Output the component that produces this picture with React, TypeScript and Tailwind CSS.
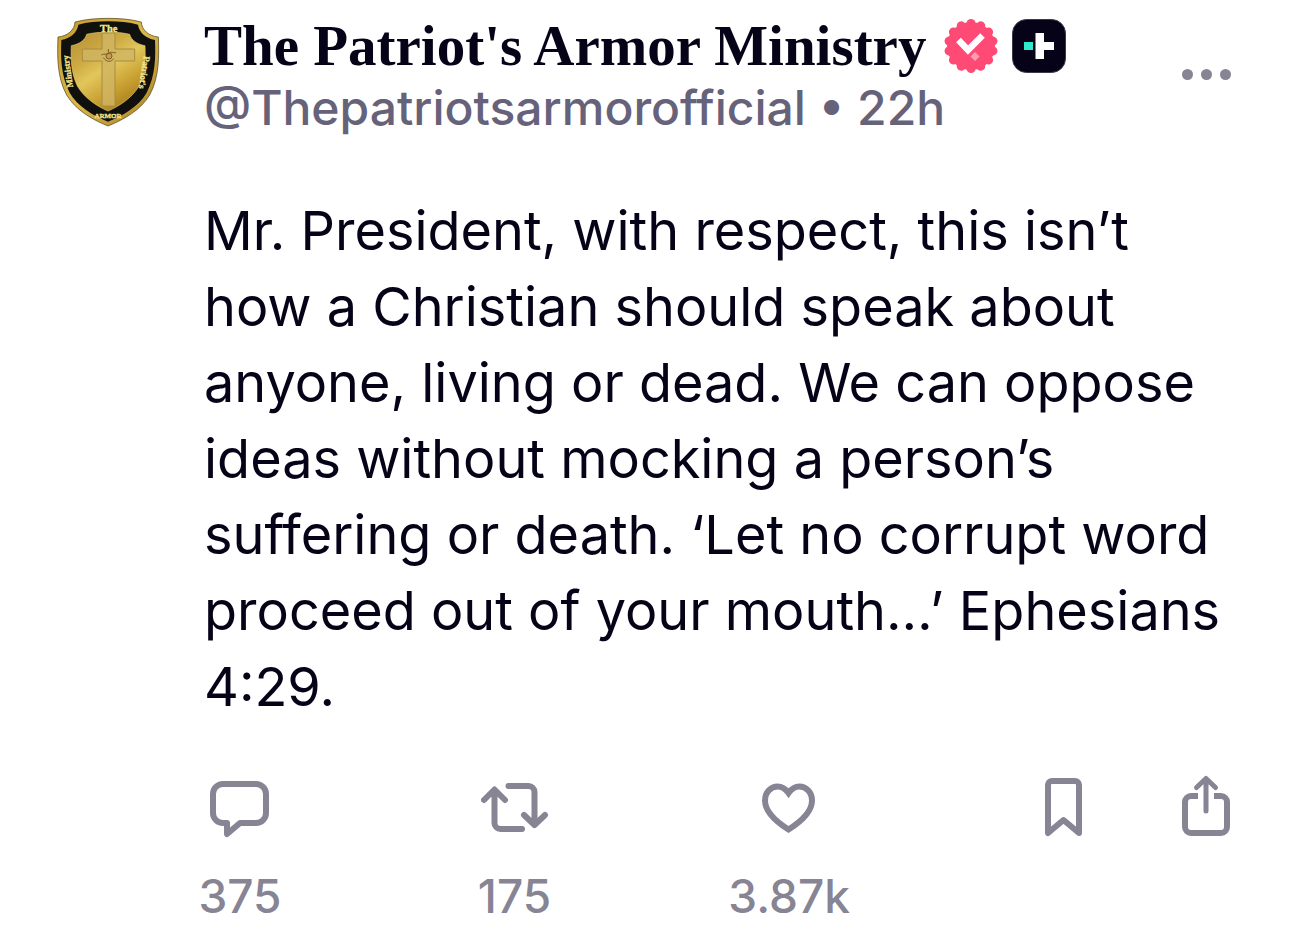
import type { ReactNode } from "react";

const Avatar = () => {
  return (
    <svg viewBox="45 30 321 339" className="h-[113px] w-[107px] shrink-0" role="img" aria-label="Shield">
      <defs>
        <linearGradient id="rim" x1="0" y1="0" x2="1" y2="1">
          <stop offset="0" stopColor="#c59a2c" />
          <stop offset="0.5" stopColor="#d9b84c" />
          <stop offset="1" stopColor="#a87c1c" />
        </linearGradient>
        <linearGradient id="plate" x1="0.1" y1="0" x2="0.7" y2="1">
          <stop offset="0" stopColor="#b8933a" />
          <stop offset="0.3" stopColor="#cdaa42" />
          <stop offset="0.5" stopColor="#e2c65c" />
          <stop offset="0.75" stopColor="#c9a132" />
          <stop offset="1" stopColor="#a67c1a" />
        </linearGradient>
      </defs>
      <path
        d="M205 40C170 40 135 43 105 51C104 74 84 93 54 96C52 150 50 215 80 270C107 315 155 343 204 363C253 343 302 315 329 270C359 215 357 150 355 96C325 93 305 74 304 51C274 43 240 40 205 40Z"
        fill="url(#rim)"
        stroke="#4a3a10"
        strokeWidth="2"
      />
      <path
        d="M205 49C172 49 141 52 115 59C111 83 92 100 64 105C62 155 62 211 89 263C113 304 158 331 204 350C250 331 296 304 320 263C347 211 347 155 345 105C317 100 298 83 294 59C268 52 237 49 205 49Z"
        fill="#10100e"
      />
      <path
        d="M205 82C180 82 160 83 140 88C136 105 118 118 94 122C92 165 94 205 112 243C134 280 170 303 204 318C238 303 275 280 297 243C315 205 317 165 315 122C291 118 273 105 269 88C249 83 229 82 205 82Z"
        fill="url(#plate)"
        stroke="#e3c76a"
        strokeWidth="2"
      />
      <path
        d="M186 84H225V132H284V168H225V303H186V168H127V132H186Z"
        fill="#d0b563"
        fillOpacity="0.8"
        stroke="#a88c42"
        strokeWidth="3"
      />
      <g fill="none" stroke="#7d5d26" strokeWidth="3">
        <circle cx="207" cy="153" r="9" fill="#c89c4b" />
        <path d="M184 150C194 144 198 151 206 145C214 138 218 145 228 143M190 158C200 172 213 172 221 161M205 132V143" />
      </g>
      <g
        fill="#f3e58c"
        stroke="#f3e58c"
        strokeWidth="1"
        fontFamily="'Liberation Serif', serif"
        fontWeight="bold"
        textAnchor="middle"
      >
        <text x="206" y="80" fontSize="31" textAnchor="middle">
          The
        </text>
        <text fontSize="26" transform="translate(92 198) rotate(-98)">
          Ministry
        </text>
        <text fontSize="27" transform="translate(304 201) rotate(99)">
          Patriot's
        </text>
        <text x="204" y="340" fontSize="21">
          ARMOR
        </text>
      </g>
    </svg>
  );
};

const VerifiedBadge = () => {
  return (
    <svg viewBox="-27 -27 54 54" className="size-[54px]" role="img" aria-label="Verified">
      <g fill="#ff4a75">
        <circle r="24" />
        {Array.from({ length: 14 }, (_, i) => (
          <circle key={i} cy="-22.500" r="4.500" transform={`rotate(${(i * 360) / 14})`} />
        ))}
      </g>
      <path d="M-12.500 -6L-3 4L11.500 -10.500" fill="none" stroke="#fff" strokeWidth="6.500" />
      <path d="M4 6L8.500 10.500L4 15L-0.500 10.500Z" fill="#ff9db6" />
    </svg>
  );
};

const PlusBadge = () => {
  return (
    <svg viewBox="0 0 54 54" className="size-[54px]" role="img" aria-label="Plus">
      <rect x="0.500" y="0.500" width="53" height="53" rx="14" fill="#060318" stroke="#3c394a" />
      <rect x="12" y="23" width="9" height="8" fill="#2feacb" />
      <path d="M23.500 14H32V23H42V31H32V40H23.500Z" fill="#fff" />
    </svg>
  );
};

type ActionProps = {
  label: string;
  count?: string;
  children: ReactNode;
};

const Action = ({ label, count, children }: ActionProps) => {
  return (
    <button aria-label={label} className="flex w-[82px] cursor-pointer flex-col items-center text-[#878494]">
      <svg
        viewBox="0 0 68 64"
        className="h-16 w-[68px]"
        fill="none"
        stroke="currentColor"
        strokeWidth="6"
        aria-hidden="true"
      >
        {children}
      </svg>
      {count && <span className="mt-7 text-[46px] leading-[60px] font-medium">{count}</span>}
    </button>
  );
};

export default function App() {
  return (
    <article className="flex gap-[42px] bg-white pt-[15px] pr-[43px] pb-3 pl-[55px] font-['Inter',sans-serif] text-[#060318]">
      <Avatar />
      <div className="min-w-0 flex-1">
        <header className="flex items-start justify-between">
          <div>
            <div className="flex items-center gap-[14px]">
              <h1 className="mr-1 font-['Liberation_Serif',serif] text-[57px] leading-[62px] font-bold whitespace-nowrap">
                The Patriot's Armor Ministry
              </h1>
              <VerifiedBadge />
              <PlusBadge />
            </div>
            <p className="text-[48px] leading-[62px] font-medium whitespace-nowrap text-[#66627a]">
              <a href="#profile">@Thepatriotsarmorofficial</a> • <time>22h</time>
            </p>
          </div>
          <button aria-label="More" className="mt-[54px] mr-4 flex cursor-pointer gap-2">
            <span className="size-[11px] rounded-full bg-[#878494]" />
            <span className="size-[11px] rounded-full bg-[#878494]" />
            <span className="size-[11px] rounded-full bg-[#878494]" />
          </button>
        </header>

        <p className="mt-[54px] pr-4 text-[54px] leading-[76px]">
          Mr. President, with respect, this isn’t how a Christian should speak about anyone, living or dead. We can
          oppose ideas without mocking a person’s suffering or death. ‘Let no corrupt word proceed out of your
          mouth…’ Ephesians 4:29.
        </p>

        <footer className="mt-[49px] -ml-[5px] grid grid-cols-[27fr_27fr_27fr_14fr_auto] items-start">
          <Action label="Reply" count="375">
            <path
              d="M17 10H50A10 10 0 0 1 60 20V39A10 10 0 0 1 50 49H34L21 60V49H17A10 10 0 0 1 7 39V20A10 10 0 0 1 17 10Z"
              strokeLinejoin="round"
            />
          </Action>
          <Action label="Repost" count="175">
            <path
              d="M3 26L13.500 15.500L24 26M13.500 17V49A6 6 0 0 0 19.500 55H41M27.500 12H47.500A6 6 0 0 1 53.500 18V50M43 41L53.500 51L64 41"
              strokeLinecap="round"
              strokeLinejoin="round"
            />
          </Action>
          <Action label="Like" count="3.87k">
            <path d="M33.500 55.500C20 47 10 37 10 26.500C10 18 16 12.500 22.500 12.500C27.500 12.500 31 15.500 33.500 19C36 15.500 39.500 12.500 44.500 12.500C51 12.500 57 18 57 26.500C57 37 47 47 33.500 55.500Z" />
          </Action>
          <Action label="Bookmark">
            <path d="M22 7H45A4 4 0 0 1 49 11V59L33.500 46L18 59V11A4 4 0 0 1 22 7Z" strokeLinejoin="round" />
          </Action>
          <Action label="Share">
            <path d="M26 22H19A6 6 0 0 0 13 28V53A6 6 0 0 0 19 59H49A6 6 0 0 0 55 53V28A6 6 0 0 0 49 22H42" />
            <path
              d="M34 37V5M24.500 13.500L34 4.500L43.500 13.500"
              strokeWidth="5"
              strokeLinecap="round"
              strokeLinejoin="round"
            />
          </Action>
        </footer>
      </div>
    </article>
  );
}
